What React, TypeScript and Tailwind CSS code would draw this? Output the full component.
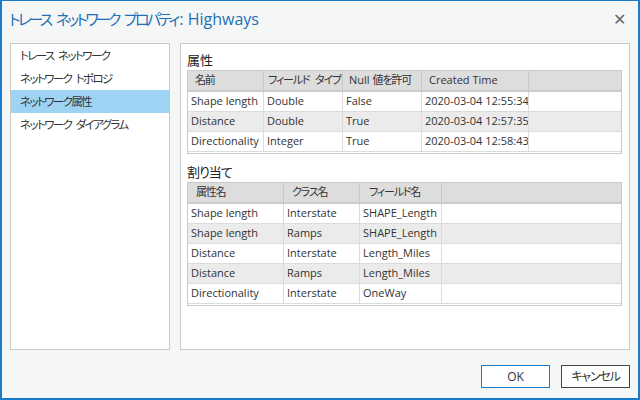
import React from 'react';

const jp = 'tracking-[-1.2px] [word-spacing:4px]';

const navItems = ['トレース ネットワーク', 'ネットワーク トポロジ', 'ネットワーク属性', 'ネットワーク ダイアグラム'];

type Col = { label: React.ReactNode; w: string; pad: string; cls: string };

const attrCols: Col[] = [
    { label: '名前', w: 'w-[76px]', pad: 'pl-[7px]', cls: jp },
    { label: 'フィールド タイプ', w: 'w-[79px]', pad: 'pl-[4px]', cls: jp },
    {
        label: (
            <>
                Null <span className="ml-[3px] tracking-[-1.2px]">値を許可</span>
            </>
        ),
        w: 'w-[79px]',
        pad: 'pl-[6px]',
        cls: ''
    },
    { label: 'Created Time', w: 'w-[107px]', pad: 'pl-[7px]', cls: '' },
    { label: '', w: 'flex-1', pad: '', cls: '' }
];

const attrRows = [
    ['Shape length', 'Double', 'False', '2020-03-04 12:55:34'],
    ['Distance', 'Double', 'True', '2020-03-04 12:57:35'],
    ['Directionality', 'Integer', 'True', '2020-03-04 12:58:43']
];

const assignCols: Col[] = [
    { label: '属性名', w: 'w-[96px]', pad: 'pl-[8px]', cls: jp },
    { label: 'クラス名', w: 'w-[76px]', pad: 'pl-[8px]', cls: jp },
    { label: 'フィールド名', w: 'w-[82px]', pad: 'pl-[9px]', cls: jp },
    { label: '', w: 'flex-1', pad: '', cls: '' }
];

const assignRows = [
    ['Shape length', 'Interstate', 'SHAPE_Length'],
    ['Shape length', 'Ramps', 'SHAPE_Length'],
    ['Distance', 'Interstate', 'Length_Miles'],
    ['Distance', 'Ramps', 'Length_Miles'],
    ['Directionality', 'Interstate', 'OneWay']
];

const Grid: React.FC<{ cols: Col[]; rows: string[][] }> = ({ cols, rows }) => (
    <div className="border border-[#c9c9c9] bg-white">
        <div className="flex h-[21px] bg-[#dddddd] border-b-2 border-[#cbcbcb]">
            {cols.map((c, i) => (
                <div
                    key={i}
                    className={`${c.w} ${c.pad} ${c.cls} flex items-center text-[11px] text-[#333] border-r border-[#c9c9c9] last:border-r-0 whitespace-nowrap overflow-hidden`}
                >
                    {c.label}
                </div>
            ))}
        </div>
        {rows.map((r, ri) => (
            <div key={ri} className={`flex h-[20px] border-b border-[#dcdcdc] ${ri % 2 === 1 ? 'bg-[#ebebeb]' : 'bg-white'}`}>
                {cols.map((c, ci) => (
                    <div
                        key={ci}
                        className={`${c.w} pl-[3px] flex items-center text-[11px] text-[#333] border-r border-[#dcdcdc] last:border-r-0 whitespace-nowrap overflow-hidden`}
                    >
                        {r[ci] ?? ''}
                    </div>
                ))}
            </div>
        ))}
        <div className="h-[1px]" />
    </div>
);

const App: React.FC = () => {
    return (
        <div className="w-[640px] h-[400px] bg-[#f5f7f7] border-t border-x-2 border-b-2 border-[#1a7acb] flex flex-col overflow-hidden font-['Open_Sans','Noto_Sans_CJK_JP',sans-serif] [font-feature-settings:'palt']">
            <header className="h-[35px] flex items-center justify-between pl-[7px] pr-[12px]">
                <span className="text-[16px] text-[#1f6fb4]">
                    <span className="text-[15px] tracking-[-2.7px] [word-spacing:4px]">トレース ネットワーク プロパティ</span>
                    <span className="ml-[2px]">: Highways</span>
                </span>
                <span className="text-[16px] text-[#666] leading-none">✕</span>
            </header>

            <div className="mt-[7px] h-[307px] flex gap-[10px] pl-[8px] pr-[8px]">
                <nav className="w-[160px] bg-white border border-[#c9c9c9]">
                    {navItems.map((n) => (
                        <div
                            key={n}
                            className={`h-[23px] flex items-center pl-[9px] text-[11.5px] tracking-[-1.6px] [word-spacing:3px] text-[#333] ${
                                n === 'ネットワーク属性' ? 'bg-[#9fd3f3]' : ''
                            }`}
                        >
                            {n}
                        </div>
                    ))}
                </nav>

                <section className="flex-1 bg-white border border-[#c9c9c9] pl-[6px] pr-[7px] pt-[8px]">
                    <div className="h-[18px] flex items-center text-[13px] text-[#222]">属性</div>
                    <Grid cols={attrCols} rows={attrRows} />
                    <div className="h-[18px] mt-[10px] flex items-center text-[13px] text-[#222] tracking-[-1px]">割り当て</div>
                    <Grid cols={assignCols} rows={assignRows} />
                </section>
            </div>

            <footer className="flex justify-end gap-[11px] pt-[15px] pr-[8px]">
                <button className="w-[69px] h-[23px] bg-white border border-[#1a7acb] text-[12px] text-[#333]">OK</button>
                <button className={`w-[69px] h-[23px] bg-white border border-[#444] text-[12px] text-[#333] ${jp}`}>キャンセル</button>
            </footer>
        </div>
    );
};

export default App;
